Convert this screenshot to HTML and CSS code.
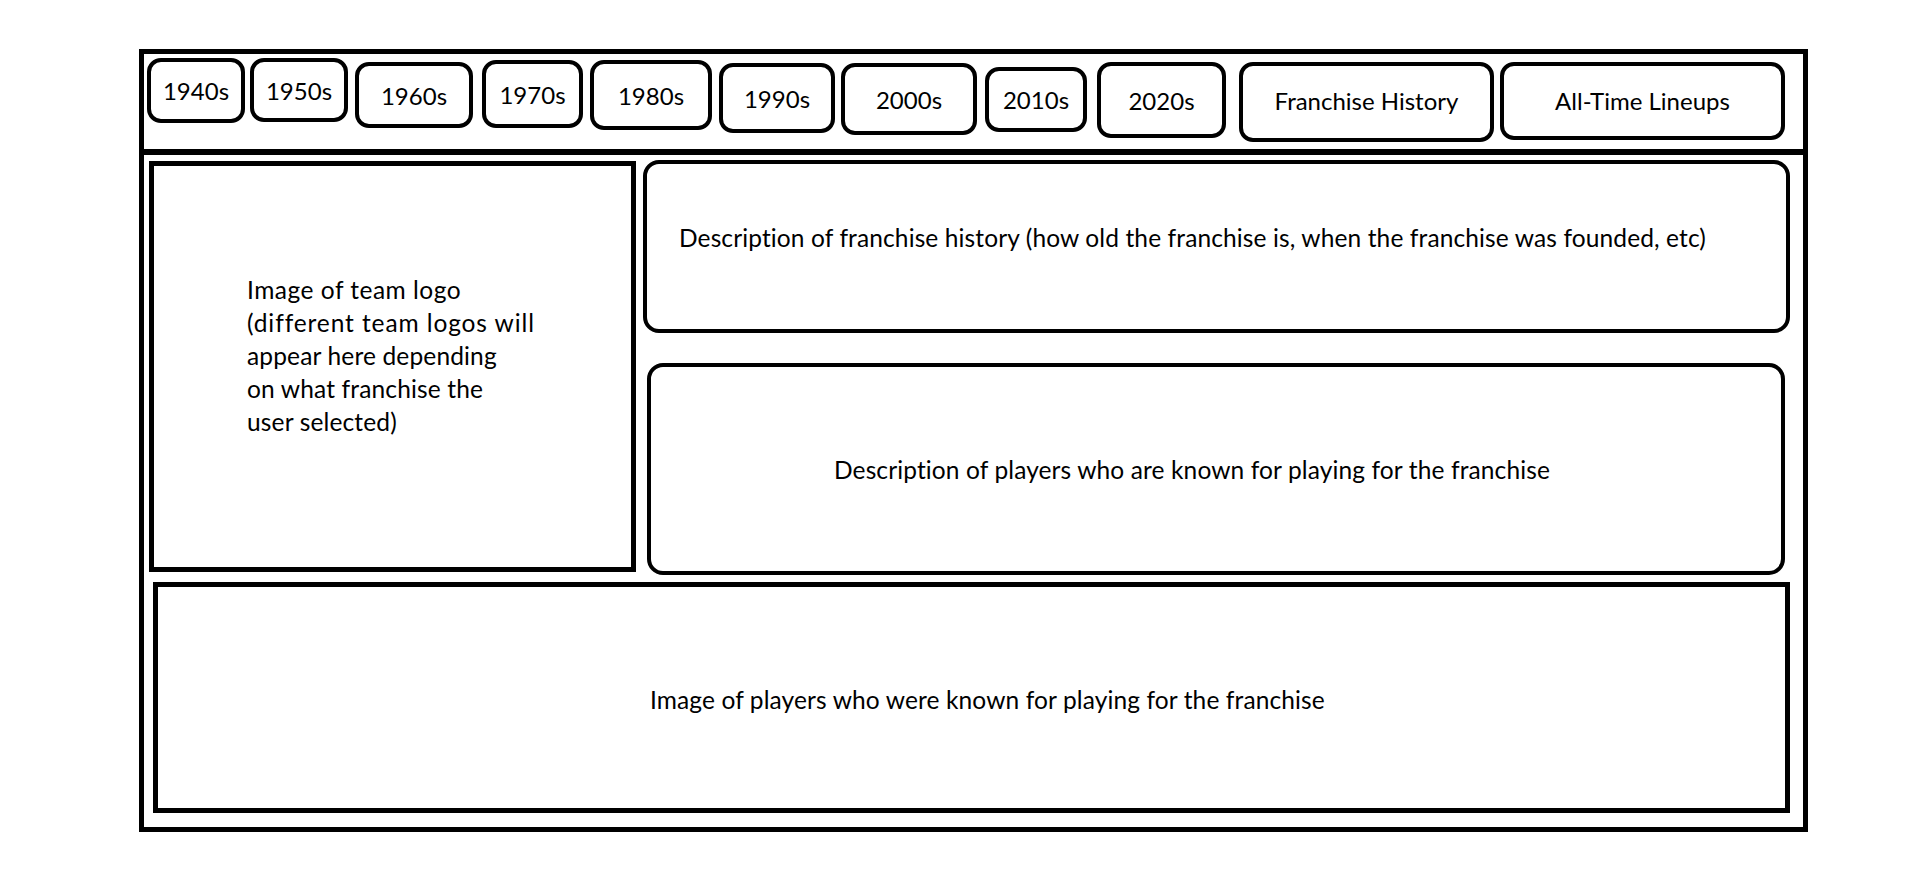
FILE: index.html
```html
<!DOCTYPE html>
<html lang="en">
<head>
<meta charset="utf-8">
<title>Franchise Wireframe</title>
<link rel="stylesheet" href="styles.css">
</head>
<body>
<div class="frame">
  <nav class="decades">
    <div class="btn y1940">1940s</div>
    <div class="btn y1950">1950s</div>
    <div class="btn y1960">1960s</div>
    <div class="btn y1970">1970s</div>
    <div class="btn y1980">1980s</div>
    <div class="btn y1990">1990s</div>
    <div class="btn y2000">2000s</div>
    <div class="btn y2010">2010s</div>
    <div class="btn y2020">2020s</div>
    <div class="btn hist">Franchise History</div>
    <div class="btn lineups">All-Time Lineups</div>
  </nav>
  <div class="content">
    <div class="top-row">
      <div class="logo-box">
        <p class="logo-text"><span class="line-a">Image of team logo</span><br><span class="line-b">(different team logos will</span><br>appear here depending<br>on what franchise the<br>user selected)</p>
      </div>
      <div class="right-col">
        <div class="card history">Description of franchise history (how old the franchise is, when the franchise was founded, etc)</div>
        <div class="card players">Description of players who are known for playing for the franchise</div>
      </div>
    </div>
    <div class="players-image">Image of players who were known for playing for the franchise</div>
  </div>
</div>
</body>
</html>
```

FILE: styles.css
```css
body {
  margin: 0;
  background: #fff;
  color: #000;
  font-family: Lato, "Open Sans", sans-serif;
}

.frame {
  box-sizing: border-box;
  width: 1669px;
  height: 783px;
  margin: 49px 0 0 139px;
  border: 5px solid #000;
  display: flex;
  flex-direction: column;
}

.decades {
  display: flex;
  align-items: flex-start;
  height: 91px;
  padding-top: 4px;
  border-bottom: 6px solid #000;
}

.btn {
  box-sizing: border-box;
  flex: none;
  border: 4px solid #000;
  border-radius: 14px;
  display: flex;
  align-items: center;
  justify-content: center;
  font-size: 24px;
  white-space: nowrap;
}

.y1940 { width: 98px;  height: 65px; margin-left: 3px;  margin-top: 0; }
.y1950 { width: 98px;  height: 64px; margin-left: 5px;  margin-top: 0; }
.y1960 { width: 118px; height: 66px; margin-left: 7px;  margin-top: 4px; }
.y1970 { width: 101px; height: 68px; margin-left: 9px;  margin-top: 2px; }
.y1980 { width: 122px; height: 70px; margin-left: 7px;  margin-top: 2px; }
.y1990 { width: 116px; height: 70px; margin-left: 7px;  margin-top: 5px; }
.y2000 { width: 136px; height: 72px; margin-left: 6px;  margin-top: 5px; }
.y2010 { width: 102px; height: 65px; margin-left: 8px;  margin-top: 9px; }
.y2020 { width: 129px; height: 76px; margin-left: 10px; margin-top: 4px; }
.hist    { width: 255px; height: 80px; margin-left: 13px; margin-top: 4px; padding-bottom: 3px; }
.lineups { width: 285px; height: 78px; margin-left: 6px;  margin-top: 4px; padding-bottom: 2px; }

.content {
  display: flex;
  flex-direction: column;
}

.top-row {
  display: flex;
  align-items: flex-start;
}

.logo-box {
  box-sizing: border-box;
  flex: none;
  width: 487px;
  height: 411px;
  margin: 6px 0 0 5px;
  border: 5px solid #000;
  padding: 107px 0 0 93px;
}

.logo-text {
  margin: 0;
  font-size: 24.5px;
  letter-spacing: 0.15px;
  line-height: 33px;
  white-space: nowrap;
}

.line-a {
  letter-spacing: 0.5px;
}

.line-b {
  letter-spacing: 0.9px;
}

.right-col {
  display: flex;
  flex-direction: column;
  margin: 5px 0 0 7px;
}

.card {
  box-sizing: border-box;
  border: 4px solid #000;
  border-radius: 16px;
  font-size: 24.5px;
  letter-spacing: 0.12px;
  line-height: 32px;
  white-space: nowrap;
}

.history {
  width: 1147px;
  height: 173px;
  padding: 58px 0 0 32px;
}

.players {
  width: 1138px;
  height: 212px;
  margin: 30px 0 0 4px;
  padding: 87px 0 0 183px;
}

.players-image {
  box-sizing: border-box;
  width: 1637px;
  height: 231px;
  margin: 7px 0 0 9px;
  border: 5px solid #000;
  padding: 97px 0 0 492px;
  font-size: 24.5px;
  letter-spacing: 0.12px;
  line-height: 32px;
  white-space: nowrap;
}
```
